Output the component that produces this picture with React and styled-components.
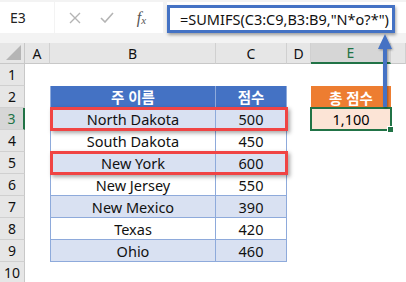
import { styled, createGlobalStyle, css } from "styled-components"

const GlobalStyle = createGlobalStyle`
  html, body {
    margin: 0;
    padding: 0;
    background: #ffffff;
  }
  body {
    font-family: "Noto Sans", "Noto Sans CJK KR", sans-serif;
    color: #000000;
  }
`

const COLS = { head: 25, A: 25, B: 166, C: 71, D: 24, E: 80 }

const Screen = styled.div`
  position: relative;
  width: 406px;
  height: 282px;
  overflow: hidden;
  background: #ffffff;
`

const FormulaBar = styled.div`
  display: flex;
  align-items: flex-start;
  height: 43px;
  padding-top: 2px;
  box-sizing: border-box;
  background: #f3f3f3;
`

const NameBox = styled.div`
  width: 54px;
  height: 31px;
  background: #ffffff;
  display: flex;
  align-items: center;
  padding-left: 10px;
  box-sizing: border-box;
  font-size: 14px;
  color: #222;
`

const ButtonsBox = styled.div`
  width: 108px;
  height: 31px;
  margin-left: 1px;
  background: #ffffff;
  display: flex;
  align-items: center;
`

const BarButton = styled.span`
  width: ${({ $w }) => $w}px;
  display: flex;
  justify-content: center;
  align-items: center;
`

const FxLabel = styled.span`
  font-family: "Liberation Serif", serif;
  font-style: italic;
  font-size: 16px;
  color: #555;
  & sub {
    font-size: 11px;
    vertical-align: -1px;
  }
`

const FormulaInput = styled.div`
  flex: 1;
  height: 31px;
  margin-left: 4px;
  background: #ffffff;
  display: flex;
  align-items: flex-end;
`

const FormulaHighlight = styled.div`
  width: 228px;
  height: 28px;
  border: 3px solid #4472c4;
  box-sizing: border-box;
  box-shadow: 1px 2px 3px rgba(0, 0, 0, 0.35);
  display: flex;
  align-items: center;
  padding-left: 10px;
  font-size: 14.5px;
  white-space: nowrap;
  color: #111;
`

const Sheet = styled.div`
  display: flex;
  flex-direction: column;
`

const SheetRow = styled.div`
  display: flex;
  height: ${({ $h }) => $h || 22}px;
`

const Corner = styled.div`
  position: relative;
  width: ${COLS.head}px;
  background: #e6e6e6;
  border-right: 1px solid #c8c8c8;
  border-bottom: 1px solid #c8c8c8;
  box-sizing: border-box;
  &::after {
    content: "";
    position: absolute;
    right: 3px;
    bottom: 3px;
    border-left: 15px solid transparent;
    border-bottom: 15px solid #b5b5b5;
  }
`

const ColHead = styled.div`
  width: ${({ $w }) => $w}px;
  flex: ${({ $grow }) => ($grow ? 1 : "none")};
  display: flex;
  align-items: center;
  justify-content: center;
  background: ${({ $active }) => ($active ? "#d6d6d6" : "#e6e6e6")};
  border-right: 1px solid #d0d0d0;
  border-bottom: ${({ $active }) =>
    $active ? "2px solid #217346" : "1px solid #c8c8c8"};
  box-sizing: border-box;
  font-size: 14px;
  color: ${({ $active }) => ($active ? "#217346" : "#111")};
`

const RowHead = styled.div`
  width: ${COLS.head}px;
  flex: none;
  display: flex;
  align-items: center;
  justify-content: center;
  background: ${({ $active }) => ($active ? "#d6d6d6" : "#e6e6e6")};
  border-right: ${({ $active }) =>
    $active ? "2px solid #217346" : "1px solid #c8c8c8"};
  border-bottom: 1px solid #d0d0d0;
  box-sizing: border-box;
  font-size: 14px;
  color: ${({ $active }) => ($active ? "#217346" : "#111")};
`

const Cell = styled.div`
  width: ${({ $w }) => $w}px;
  flex: ${({ $grow }) => ($grow ? 1 : "none")};
  display: flex;
  align-items: center;
  justify-content: center;
  box-sizing: border-box;
  font-size: 14.5px;
  white-space: nowrap;
`

const TableGroup = styled.div`
  position: relative;
  display: flex;
  ${({ $marked }) =>
    $marked &&
    css`
      &::after {
        content: "";
        position: absolute;
        left: 0;
        top: -1px;
        right: -1px;
        bottom: -1px;
        border: 3px solid #f04444;
        box-shadow: 2px 2px 4px rgba(0, 0, 0, 0.35);
        z-index: 2;
      }
    `}
`

const TableCell = styled(Cell)`
  background: ${({ $tone }) =>
    $tone === "head" ? "#4472c4" : $tone === "band" ? "#d9e1f2" : "#ffffff"};
  color: ${({ $tone }) => ($tone === "head" ? "#ffffff" : "#111")};
  font-weight: ${({ $tone }) => ($tone === "head" ? 600 : 400)};
  border-right: 1px solid #8eaadb;
  border-bottom: 1px solid #8eaadb;
  border-left: ${({ $first }) => ($first ? "1px solid #8eaadb" : "none")};
`

const TotalHead = styled(Cell)`
  background: #ed7d31;
  color: #ffffff;
  font-weight: 600;
`

const TotalCell = styled(Cell)`
  position: relative;
  background: #fce4d6;
  border: 2px solid #217346;
  margin: -1px 0 0 -1px;
  height: 24px;
  width: 82px;
  &::after {
    content: "";
    position: absolute;
    right: -4px;
    bottom: -4px;
    width: 5px;
    height: 5px;
    background: #217346;
    border: 1px solid #ffffff;
  }
`

const Arrow = styled.svg`
  position: absolute;
  left: 376px;
  top: 33px;
  z-index: 3;
  overflow: visible;
`

const rows = [
  { name: "North Dakota", score: 500, marked: true },
  { name: "South Dakota", score: 450 },
  { name: "New York", score: 600, marked: true },
  { name: "New Jersey", score: 550 },
  { name: "New Mexico", score: 390 },
  { name: "Texas", score: 420 },
  { name: "Ohio", score: 460 },
]

const Blank = ({ w, grow }) => <Cell $w={w} $grow={grow} />

const App = () => {
  return (
    <Screen>
      <GlobalStyle />
      <FormulaBar>
        <NameBox>E3</NameBox>
        <ButtonsBox>
          <BarButton $w={40}>
            <svg width="12" height="12" viewBox="0 0 12 12">
              <path d="M1 1 L11 11 M11 1 L1 11" stroke="#b4b4b4" strokeWidth="1.4" fill="none" />
            </svg>
          </BarButton>
          <BarButton $w={26}>
            <svg width="14" height="11" viewBox="0 0 14 11">
              <path d="M1 6 L5 10 L13 1" stroke="#b4b4b4" strokeWidth="1.6" fill="none" />
            </svg>
          </BarButton>
          <BarButton $w={44}>
            <FxLabel>
              f<sub>x</sub>
            </FxLabel>
          </BarButton>
        </ButtonsBox>
        <FormulaInput>
          <FormulaHighlight>=SUMIFS(C3:C9,B3:B9,"N*o?*")</FormulaHighlight>
        </FormulaInput>
      </FormulaBar>

      <Sheet>
        <SheetRow $h={21}>
          <Corner />
          <ColHead $w={COLS.A}>A</ColHead>
          <ColHead $w={COLS.B}>B</ColHead>
          <ColHead $w={COLS.C}>C</ColHead>
          <ColHead $w={COLS.D}>D</ColHead>
          <ColHead $w={COLS.E} $active>E</ColHead>
          <ColHead $grow />
        </SheetRow>

        <SheetRow>
          <RowHead>1</RowHead>
          <Blank grow />
        </SheetRow>

        <SheetRow>
          <RowHead>2</RowHead>
          <Blank w={COLS.A} />
          <TableGroup>
            <TableCell $w={COLS.B} $tone="head" $first>주 이름</TableCell>
            <TableCell $w={COLS.C} $tone="head">점수</TableCell>
          </TableGroup>
          <Blank w={COLS.D} />
          <TotalHead $w={COLS.E}>총 점수</TotalHead>
          <Blank grow />
        </SheetRow>

        {rows.map((row, i) => (
          <SheetRow key={row.name}>
            <RowHead $active={i === 0}>{i + 3}</RowHead>
            <Blank w={COLS.A} />
            <TableGroup $marked={row.marked}>
              <TableCell $w={COLS.B} $tone={i % 2 === 0 ? "band" : "plain"} $first>
                {row.name}
              </TableCell>
              <TableCell $w={COLS.C} $tone={i % 2 === 0 ? "band" : "plain"}>
                {row.score}
              </TableCell>
            </TableGroup>
            <Blank w={COLS.D} />
            {i === 0 ? <TotalCell $w={COLS.E}>1,100</TotalCell> : <Blank w={COLS.E} />}
            <Blank grow />
          </SheetRow>
        ))}

        <SheetRow>
          <RowHead>10</RowHead>
          <Blank grow />
        </SheetRow>
      </Sheet>

      <Arrow width="18" height="76" viewBox="0 0 18 76">
        <defs>
          <filter id="arrowShadow" x="-50%" y="-20%" width="200%" height="140%">
            <feDropShadow dx="1" dy="1" stdDeviation="1" floodOpacity="0.35" />
          </filter>
        </defs>
        <g filter="url(#arrowShadow)" fill="#4472c4" stroke="none">
          <rect x="7" y="12" width="4" height="62" rx="1" />
          <polygon points="9,1 2,16 16,16" />
        </g>
      </Arrow>
    </Screen>
  )
}

export default App
